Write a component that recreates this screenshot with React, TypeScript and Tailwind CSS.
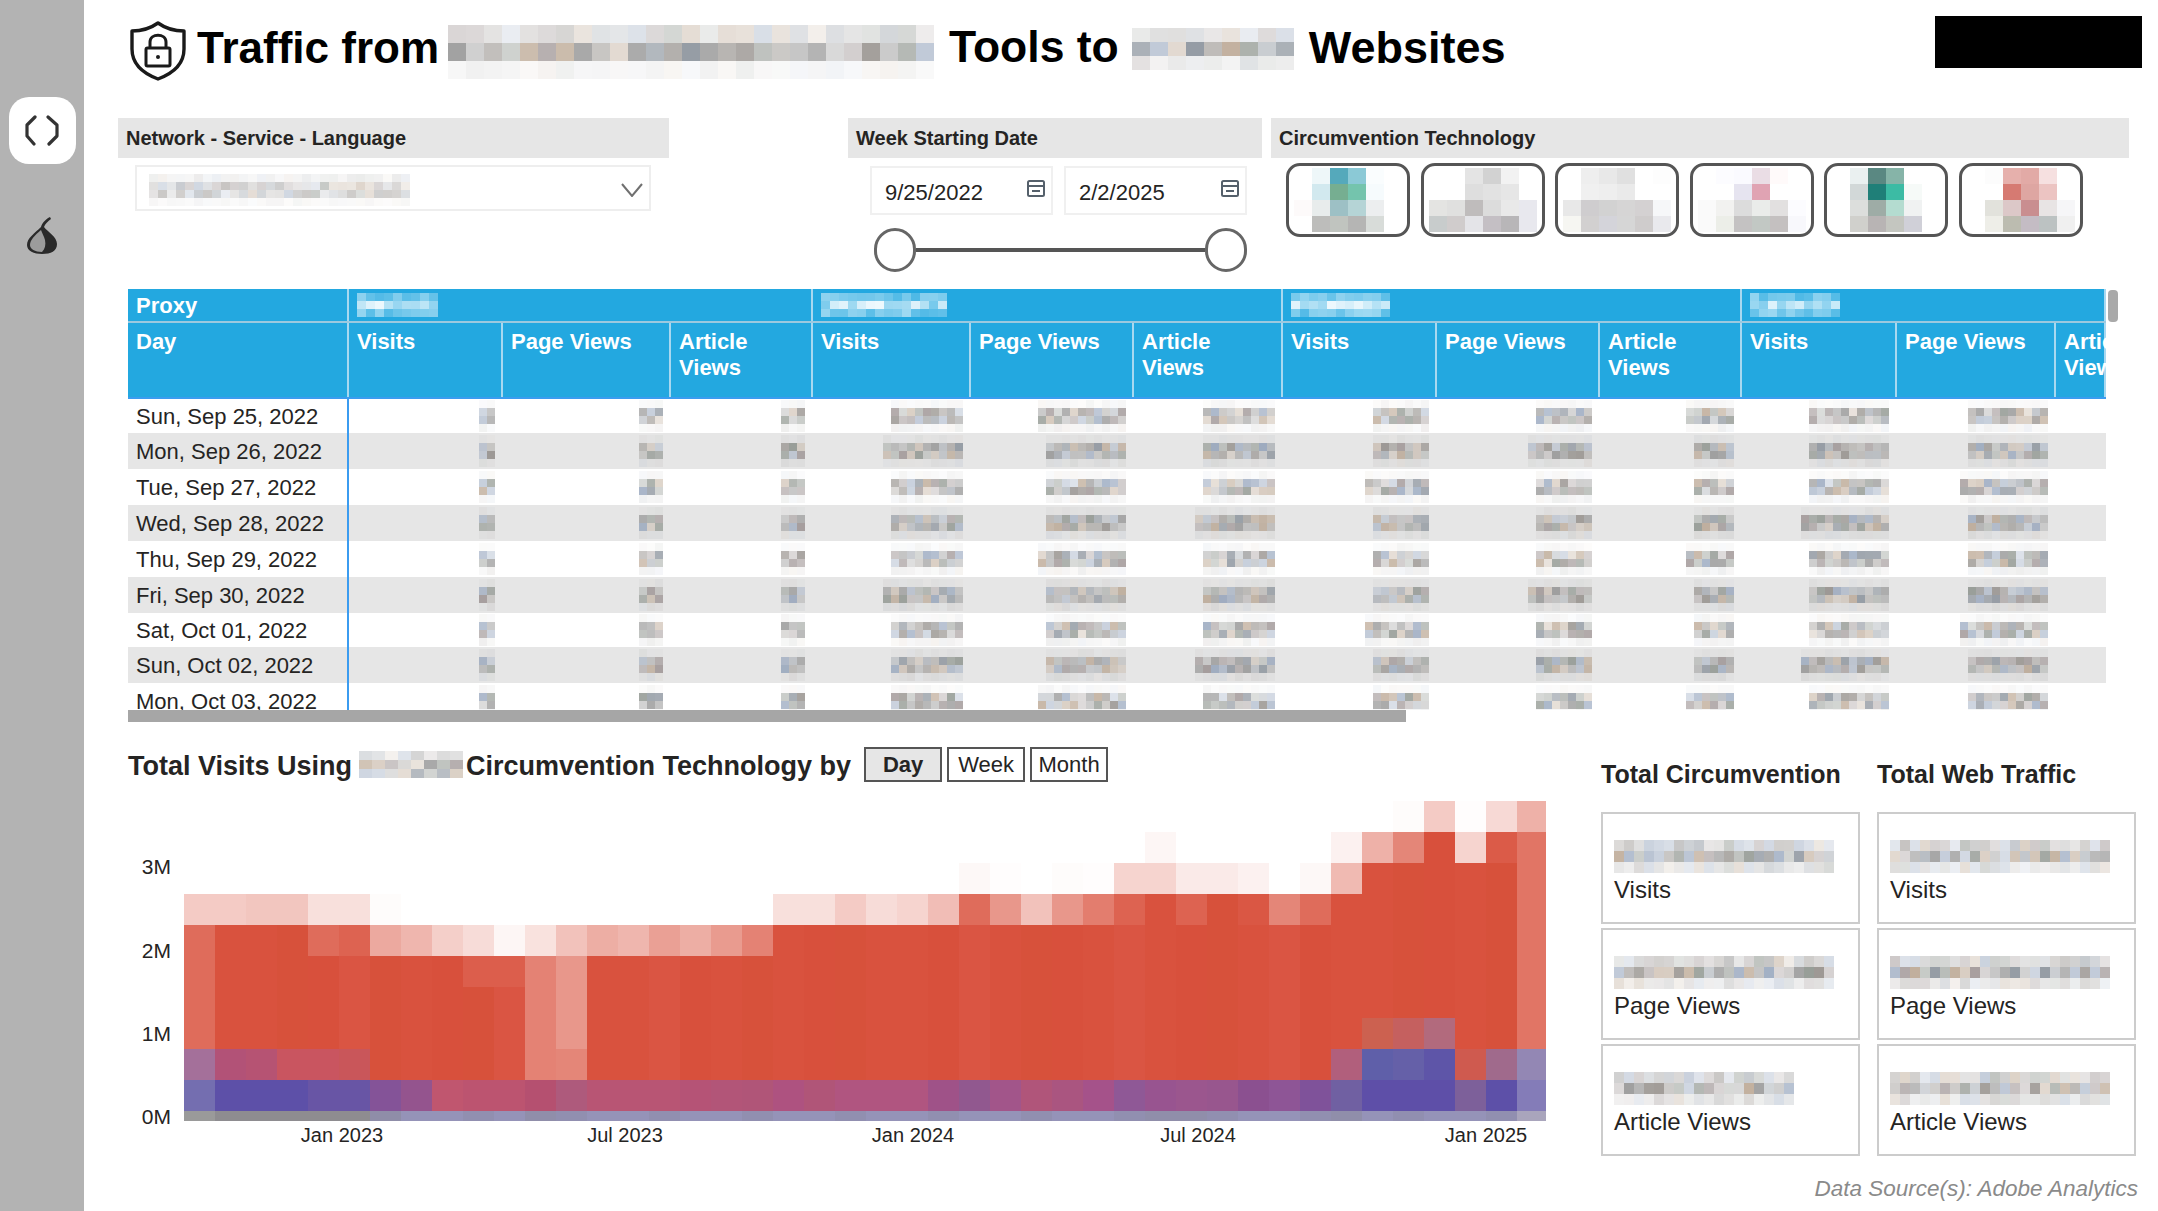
const FONT = '[font-family:"Liberation_Sans",Arial,sans-serif]';

// deterministic noise so the pixelated blocks stay the same on every load
function noise(seed: number) {
  let s = seed * 9301 + 49297;
  return () => {
    s = (s * 9301 + 49297) % 233280;
    return s / 233280;
  };
}

const GRAY_TONES = ['118,112,106', '108,118,130', '122,122,122', '130,118,118', '112,120,112', '170,145,120', '120,140,170'];

function Mosaic({
  cols,
  rows,
  cw,
  ch,
  seed,
  profile,
  tone = 'gray',
}: {
  cols: number;
  rows: number;
  cw: number;
  ch: number;
  seed: number;
  profile: number[];
  tone?: 'gray' | 'white';
}) {
  const rnd = noise(seed);
  const cells = [];
  for (let r = 0; r < rows; r++) {
    for (let c = 0; c < cols; c++) {
      const a = Math.min(1, profile[r % profile.length] * (0.55 + rnd() * 0.9));
      const base = tone === 'white' ? '255,255,255' : GRAY_TONES[Math.floor(rnd() * GRAY_TONES.length)];
      cells.push(<rect key={`${r}-${c}`} x={c * cw} y={r * ch} width={cw} height={ch} fill={`rgba(${base},${a})`} />);
    }
  }
  return (
    <svg width={cols * cw} height={rows * ch} className="block shrink-0" shapeRendering="crispEdges">
      {cells}
    </svg>
  );
}

const TILES = [
  [
    ['#fff', '#eef7f9', '#55a9bb', '#8bc9d6', '#fafdfe', '#fff'],
    ['#fff', '#d2e9ef', '#76ae91', '#74c4ad', '#f6fbfd', '#fff'],
    ['#fdfafa', '#e8ecec', '#9dc0c5', '#b5d4d6', '#eceeef', '#fff'],
    ['#fff', '#bdbdbb', '#c0c4bf', '#b5b5b4', '#d8dcd9', '#fff'],
  ],
  [
    ['#fff', '#fff', '#e4e4e4', '#d2d2d2', '#f2f2f2', '#fff'],
    ['#fff', '#fff', '#dedede', '#e2e2e2', '#e6e6e6', '#fff'],
    ['#e4e4e2', '#e0e0df', '#bfbcbc', '#dcdcdc', '#e9e9e9', '#e8e8ee'],
    ['#c8cccc', '#d0cccc', '#e4e4e8', '#c4bfc4', '#b8b6b8', '#e8e8ee'],
  ],
  [
    ['#fff', '#eeeeee', '#e8e8e8', '#e0e0e0', '#fff', '#fdfdfd'],
    ['#fff', '#f0f0f0', '#eeeeee', '#eaeaea', '#fff', '#fff'],
    ['#e8e8e8', '#cfcdcf', '#d2d2d2', '#d6d5d5', '#d4d1d2', '#f6f7f9'],
    ['#f6f6f2', '#d2d0d0', '#d4d4da', '#d6d6d6', '#cfcccc', '#e9e9ed'],
  ],
  [
    ['#fff', '#fcfcff', '#fafaff', '#eadde5', '#fffafa', '#fff'],
    ['#fff', '#fff', '#e6e4f0', '#e0a3b3', '#fff', '#fff'],
    ['#fafafa', '#f2f2f0', '#dcdcdc', '#eaecea', '#e2e0e0', '#fcfcff'],
    ['#fafafa', '#eceee8', '#c4c2c2', '#c2c8c4', '#c4c0c0', '#f8f8fc'],
  ],
  [
    ['#fff', '#eaf0f0', '#5a8882', '#86b4a8', '#fff', '#fff'],
    ['#fff', '#d2d8d8', '#1f7f78', '#3cbba4', '#f6faf8', '#fff'],
    ['#fff', '#dcdedc', '#9eaca6', '#b4dcd0', '#f0f2f2', '#fff'],
    ['#fff', '#d0d0cc', '#b8b4b4', '#c4c6c0', '#d0d0d8', '#fff'],
  ],
  [
    ['#fff', '#fcfcfc', '#e6b0ac', '#e2aaa6', '#f6e0e0', '#fff'],
    ['#fff', '#fff', '#d67a72', '#dea6a2', '#ecc4c2', '#fff'],
    ['#fff', '#e2e2dc', '#dcc8c8', '#c98e90', '#e8e4e4', '#f6f6f8'],
    ['#fff', '#eeeee8', '#bcbcb0', '#c4bcc4', '#bcc2c2', '#f0f0f0'],
  ],
];

function Tile({ colors }: { colors: string[][] }) {
  return (
    <div className="flex h-[74px] w-[124px] items-center justify-center rounded-[14px] border-[3px] border-[#555555] bg-white">
      <svg width={108} height={64} shapeRendering="crispEdges">
        {colors.map((row, r) =>
          row.map((fill, c) => <rect key={`${r}-${c}`} x={c * 18} y={r * 16} width={18} height={16} fill={fill} />),
        )}
      </svg>
    </div>
  );
}

// ---- heat map ----
const REDS = ['#d9523e', '#d8503c', '#da5543', '#d7513b'];
function mix(i: number, col: number) {
  if (i >= 1) return REDS[(col * 7) % 4 === 0 ? 1 : col % 5 === 0 ? 2 : col % 3 === 0 ? 3 : 0];
  const ch = (v: number) => Math.round(255 + (v - 255) * i);
  return `rgb(${ch(217)},${ch(82)},${ch(62)})`;
}

function band(fallback: number, over: Record<number, number | string>) {
  return Array.from({ length: 44 }, (_, c) => {
    const v = over[c] ?? fallback;
    return typeof v === 'string' ? v : mix(v, c);
  });
}

const body = { 0: 0.85, 11: 0.72, 12: 0.6, 43: 0.8 };
const HEAT: string[][] = [
  band(0, { 39: 0.02, 40: 0.3, 41: 0.01, 42: 0.22, 43: 0.45 }),
  band(0, { 31: 0.05, 37: 0.08, 38: 0.45, 39: 0.7, 40: 1, 41: 0.25, 42: 0.95, 43: 0.8 }),
  band(0, { 25: 0.04, 26: 0.01, 28: 0.02, 29: 0.01, 30: 0.25, 31: 0.25, 32: 0.12, 33: 0.12, 34: 0.08, 36: 0.04, 37: 0.4, 38: 1, 39: 1, 40: 1, 41: 1, 42: 1, 43: 0.8 }),
  band(1, { 0: 0.3, 1: 0.3, 2: 0.33, 3: 0.33, 4: 0.18, 5: 0.18, 6: 0.02, 7: 0, 8: 0, 9: 0, 10: 0, 11: 0, 12: 0, 13: 0, 14: 0, 15: 0, 16: 0, 17: 0, 18: 0, 19: 0.18, 20: 0.18, 21: 0.3, 22: 0.2, 23: 0.25, 24: 0.38, 25: 0.85, 26: 0.6, 27: 0.35, 28: 0.6, 29: 0.75, 30: 0.9, 32: 0.9, 34: 0.97, 35: 0.7, 36: 0.85, 43: 0.8 }),
  band(1, { 0: 0.85, 4: 0.85, 5: 0.9, 6: 0.5, 7: 0.42, 8: 0.28, 9: 0.2, 10: 0.05, 11: 0.17, 12: 0.35, 13: 0.47, 14: 0.42, 15: 0.55, 16: 0.47, 17: 0.58, 18: 0.72, 43: 0.8 }),
  band(1, { ...body, 9: 0.93, 10: 0.93 }),
  band(1, body),
  band(1, { ...body, 38: '#cc6150', 39: '#c5605f', 40: '#b26a7d' }),
  band(1, { 0: '#a4709a', 1: '#b25277', 2: '#b65373', 3: '#c95560', 4: '#c95560', 5: '#c9565a', 11: 0.72, 12: 0.7, 37: '#b15f7c', 38: '#5f5fa9', 39: '#6560a8', 40: '#5e55a8', 41: '#cf5a4f', 42: '#a06a8c', 43: '#9387b4' }),
  band(1, {
    0: '#746eb0', 1: '#5d50a8', 2: '#5d50a8', 3: '#5d50a8', 4: '#6855a5', 5: '#6855a5', 6: '#845398', 7: '#94548e', 8: '#c0566f', 9: '#bc5470', 10: '#bc5470', 11: '#b55070', 12: '#ae5a7c',
    13: '#b85574', 14: '#b85574', 15: '#b85574', 16: '#b55376', 17: '#b25578', 18: '#b05578', 19: '#ae5280', 20: '#b05578', 21: '#b05580', 22: '#b05580', 23: '#b05580', 24: '#9f5288', 25: '#91588f',
    26: '#a2558a', 27: '#b0557a', 28: '#aa5580', 29: '#a5528a', 30: '#8f5896', 31: '#985490', 32: '#9b568e', 33: '#98568e', 34: '#8b5090', 35: '#8e5596', 36: '#7f529a', 37: '#7060a2',
    38: '#5e4fa8', 39: '#5e4fa8', 40: '#5e4fa8', 41: '#7d609a', 42: '#5d50a8', 43: '#847cb8',
  }),
  Array.from({ length: 44 }, (_, c) => {
    if (c === 0) return '#9a9a9a';
    if (c < 6) return '#8e8c90';
    if (c === 6) return '#8f8da8';
    if (c === 43) return '#a9a5bc';
    if (c === 11 || c === 31 || c === 32 || c === 37) return '#908eaa';
    return c % 3 === 0 ? '#918fb0' : '#9593b8';
  }),
];

const Y_TICKS = [
  ['3M', 77],
  ['2M', 161],
  ['1M', 244],
  ['0M', 327],
] as const;
const X_TICKS = [
  ['Jan 2023', 214],
  ['Jul 2023', 497],
  ['Jan 2024', 785],
  ['Jul 2024', 1070],
  ['Jan 2025', 1358],
] as const;

function HeatChart() {
  return (
    <svg width={1418} height={360} className="mt-[9px] block" fontFamily='"Liberation Sans", Arial, sans-serif'>
      <g shapeRendering="crispEdges">
        {HEAT.map((row, r) =>
          row.map((fill, c) => (
            <rect key={`${r}-${c}`} x={56 + c * 31} y={10 + r * 31} width={31} height={r === 10 ? 10 : 31} fill={fill} />
          )),
        )}
      </g>
      {Y_TICKS.map(([label, y]) => (
        <text key={label} x={43} y={y} textAnchor="end" dominantBaseline="middle" fontSize={21} fill="#252423">
          {label}
        </text>
      ))}
      {X_TICKS.map(([label, x]) => (
        <text key={label} x={x} y={346} textAnchor="middle" dominantBaseline="middle" fontSize={20} fill="#252423">
          {label}
        </text>
      ))}
    </svg>
  );
}

// ---- table ----
const GRID =
  'grid grid-cols-[221px_154px_168px_142px_158px_163px_149px_154px_163px_142px_155px_159px_50px]';
const DIVIDER = 'border-r-2 border-[#a8d8f0]';
const GROUPS = [
  { cols: 9, span: 'col-span-3', seed: 11 },
  { cols: 14, span: 'col-span-3', seed: 23 },
  { cols: 11, span: 'col-span-3', seed: 37 },
  { cols: 10, span: 'col-span-3', seed: 41 },
];
const DAYS = [
  'Sun, Sep 25, 2022',
  'Mon, Sep 26, 2022',
  'Tue, Sep 27, 2022',
  'Wed, Sep 28, 2022',
  'Thu, Sep 29, 2022',
  'Fri, Sep 30, 2022',
  'Sat, Oct 01, 2022',
  'Sun, Oct 02, 2022',
  'Mon, Oct 03, 2022',
];
const ROW_HEIGHTS = ['h-[34px]', 'h-9', 'h-9', 'h-9', 'h-9', 'h-9', 'h-[34px]', 'h-9', 'h-9'];
const VALUE_WIDTHS = [2, 3, 3, 9, 10, 9, 7, 7, 5, 10, 10];

function DataTable() {
  return (
    <div className={`ml-[44px] flex h-[433px] items-start ${FONT}`}>
      <div className="w-[1978px]">
        <div className="h-[421px] overflow-hidden">
          <div className="bg-[#23a8e0] text-[22px] font-bold leading-[26px] text-white">
            <div className={`${GRID} h-[34px] border-b-2 border-[#9cc9df]`}>
              <div className={`${DIVIDER} px-2 pt-1`}>Proxy</div>
              {GROUPS.map((g) => (
                <div key={g.seed} className={`${g.span} ${DIVIDER} flex items-center pl-2`}>
                  <Mosaic cols={g.cols} rows={3} cw={9} ch={8} seed={g.seed} profile={[0.35, 0.65, 0.4]} tone="white" />
                </div>
              ))}
            </div>
            <div className={`${GRID} h-[76px] overflow-hidden border-b-2 border-[#3b9cf0]`}>
              <div className={`${DIVIDER} px-2 pt-1.5`}>Day</div>
              {GROUPS.flatMap((g) => [
                <div key={`${g.seed}-v`} className={`${DIVIDER} pl-2 pt-1.5`}>
                  Visits
                </div>,
                <div key={`${g.seed}-p`} className={`${DIVIDER} pl-2 pt-1.5`}>
                  Page Views
                </div>,
                <div key={`${g.seed}-a`} className={`${DIVIDER} whitespace-nowrap pl-2 pt-1.5`}>
                  Article
                  <br />
                  Views
                </div>,
              ])}
            </div>
          </div>
          {DAYS.map((day, r) => (
            <div
              key={day}
              className={`${GRID} ${ROW_HEIGHTS[r]} ${r % 2 === 1 ? 'bg-[#e6e6e6]' : 'bg-white'} items-stretch text-[22px] text-[#252423]`}
            >
              <div className="flex items-center border-r-2 border-[#3b9cf0] pl-2">{day}</div>
              {VALUE_WIDTHS.map((w, c) => (
                <div key={c} className="flex items-center justify-end pr-2">
                  <Mosaic
                    cols={w + ((r + c) % 4 === 0 && w > 3 ? 1 : 0)}
                    rows={4}
                    cw={8}
                    ch={8}
                    seed={r * 17 + c * 5 + 3}
                    profile={[0.05, 0.45, 0.45, 0.08]}
                  />
                </div>
              ))}
              <div />
            </div>
          ))}
        </div>
        <div className="h-3 w-[1278px] bg-[#a6a6a6]" />
      </div>
      <div className="ml-0.5 mt-px h-8 w-2.5 rounded-sm bg-[#a9a9a9]" />
    </div>
  );
}

// ---- small drawings ----
function ShieldLock() {
  return (
    <svg width={58} height={60} viewBox="0 0 58 60" fill="none" stroke="#1a1a1a" className="mt-[7px] shrink-0">
      <path d="M29 2 C36 7 45 10 55 10 V28 C55 42 45 52 29 58 C13 52 3 42 3 28 V10 C13 10 22 7 29 2 Z" strokeWidth={3.4} strokeLinejoin="round" />
      <rect x={17} y={27} width={24} height={18} rx={1.5} strokeWidth={3} />
      <path d="M21 27 V21 C21 12 37 12 37 21 V27" strokeWidth={3} />
      <circle cx={29} cy={36} r={2} fill="#1a1a1a" stroke="none" />
    </svg>
  );
}

function Parens() {
  return (
    <svg width={34} height={32} viewBox="0 0 34 32" fill="none" stroke="#333333" strokeWidth={3.2} strokeLinecap="round" strokeLinejoin="round">
      <path d="M10 2 L2 10 L2 21 L9 29" />
      <path d="M23 2 L32 10 L32 21 L24 29" />
    </svg>
  );
}

function Onion() {
  return (
    <svg width={30} height={40} viewBox="0 0 30 40">
      <path d="M23 1 C19 3 15 7 14 11 C8 17 0 22 0 29 C0 35 7 38 15 38 C24 38 30 35 30 28 C30 21 21 16 17 11 C18 8 21 5 24 3 Z" fill="#2a2a2a" />
      <path d="M14 14 C8 19 3 24 3 29 C3 33 8 36 15 36 C18 33 19 29 18 24 C17 20 15 17 14 14 Z" fill="#9c9c9c" />
    </svg>
  );
}

function CalendarIcon() {
  return (
    <svg width={18} height={17} viewBox="0 0 18 17" fill="none" stroke="#55606b" strokeWidth={2} className="mb-1 shrink-0">
      <rect x={1} y={1} width={16} height={15} rx={1.5} />
      <path d="M1 6 H17 M5 11 H13" />
    </svg>
  );
}

function DateBox({ value }: { value: string }) {
  return (
    <div className="flex h-[49px] w-[183px] items-center justify-between border-2 border-[#f0f0f0] pl-[13px] pr-[6px] text-[22px] text-[#252423]">
      <span className="mt-1">{value}</span>
      <CalendarIcon />
    </div>
  );
}

function Thumb() {
  return <div className="h-11 w-[42px] shrink-0 rounded-full border-[3px] border-[#666666] bg-white" />;
}

function FilterLabel({ children }: { children: string }) {
  return (
    <div className="flex h-10 items-center bg-[#e6e6e6] pl-2 text-[20px] font-bold text-[#252423]">{children}</div>
  );
}

function ToggleButton({ label, active }: { label: string; active?: boolean }) {
  return (
    <div
      className={`flex h-[35px] w-[78px] items-center justify-center border-2 border-[#555555] text-[22px] text-[#252423] ${active ? 'bg-[#e6e6e6] font-bold' : 'bg-white font-normal'}`}
    >
      {label}
    </div>
  );
}

function KpiCard({ label, seed, cols }: { label: string; seed: number; cols: number }) {
  return (
    <div className="flex h-[112px] flex-col justify-center border-2 border-[#cccccc] pl-[11px] pt-[7px] text-[24px] leading-7 text-[#252423]">
      <Mosaic cols={cols} rows={3} cw={10} ch={11} seed={seed} profile={[0.3, 0.5, 0.2]} />
      <div className="mt-[3px]">{label}</div>
    </div>
  );
}

export default function App() {
  return (
    <div className={`flex h-[1211px] w-[2158px] overflow-hidden bg-white ${FONT}`}>
      {/* nav rail */}
      <div className="flex w-[84px] shrink-0 flex-col items-center bg-[#b3b3b3] pt-[97px]">
        <div className="flex h-[67px] w-[67px] items-center justify-center rounded-[20px] bg-white">
          <Parens />
        </div>
        <div className="mt-[52px]">
          <Onion />
        </div>
      </div>

      <div className="min-w-0 flex-1">
        {/* title */}
        <div className="flex h-[118px] items-center pb-[23px] pl-[45px] pr-4 text-[44px] font-bold leading-none text-black">
          <ShieldLock />
          <span className="ml-[10px]">Traffic from</span>
          <div className="ml-[9px] mt-[9px]">
            <Mosaic cols={27} rows={3} cw={18} ch={18} seed={5} profile={[0.22, 0.5, 0.08]} />
          </div>
          <span className="ml-[15px] text-[44.5px]">Tools to</span>
          <div className="ml-[13px] mt-0.5">
            <Mosaic cols={9} rows={3} cw={18} ch={14} seed={9} profile={[0.2, 0.5, 0.15]} />
          </div>
          <span className="ml-[15px] text-[45px]">Websites</span>
          <div className="mb-[11px] ml-auto h-[52px] w-[207px] bg-black" />
        </div>

        {/* slicers */}
        <div className="flex h-[171px] items-start pl-[34px]">
          <div className="w-[551px]">
            <FilterLabel>Network - Service - Language</FilterLabel>
            <div className="ml-[17px] mt-[7px] flex h-[46px] w-[516px] items-center justify-between border-2 border-[#eeeeee] pl-3 pr-1.5">
              <div className="mt-1">
                <Mosaic cols={29} rows={4} cw={9} ch={8} seed={19} profile={[0.1, 0.28, 0.26, 0.05]} />
              </div>
              <svg width={22} height={14} viewBox="0 0 22 14" fill="none" stroke="#707070" strokeWidth={2} className="mt-1">
                <path d="M1 1 L11 13 L21 1" />
              </svg>
            </div>
          </div>
          <div className="ml-[179px] w-[414px]">
            <FilterLabel>Week Starting Date</FilterLabel>
            <div className="ml-[22px] mt-2 flex gap-[11px]">
              <DateBox value="9/25/2022" />
              <DateBox value="2/2/2025" />
            </div>
            <div className="ml-[26px] mt-[13px] flex w-[373px] items-center">
              <Thumb />
              <div className="h-1 flex-1 bg-[#555555]" />
              <Thumb />
            </div>
          </div>
          <div className="ml-[9px] w-[858px]">
            <FilterLabel>Circumvention Technology</FilterLabel>
            <div className="ml-[15px] mt-[5px] flex gap-[10.5px]">
              {TILES.map((t, i) => (
                <Tile key={i} colors={t} />
              ))}
            </div>
          </div>
        </div>

        <DataTable />

        {/* chart and totals */}
        <div className="flex">
          <div className="ml-[44px] w-[1473px] pt-[25px]">
            <div className="flex h-[35px] items-center text-[27px] font-bold text-[#252423]">
              <span className="mt-1">Total Visits Using</span>
              <div className="ml-[7px]">
                <Mosaic cols={8} rows={3} cw={13} ch={9} seed={31} profile={[0.22, 0.45, 0.35]} />
              </div>
              <span className="ml-[3px] mt-1">Circumvention Technology by</span>
              <div className="ml-[13px] flex gap-[5px]">
                <ToggleButton label="Day" active />
                <ToggleButton label="Week" />
                <ToggleButton label="Month" />
              </div>
            </div>
            <HeatChart />
          </div>

          <div className="w-[537px] pt-[38px]">
            <div className="grid grid-cols-[259px_259px] gap-x-[17px] text-[25px] font-bold leading-7 text-[#252423]">
              <div>Total Circumvention</div>
              <div>Total Web Traffic</div>
            </div>
            <div className="mt-[24px] grid grid-cols-[259px_259px] gap-x-[17px] gap-y-1">
              <KpiCard label="Visits" seed={51} cols={22} />
              <KpiCard label="Visits" seed={52} cols={22} />
              <KpiCard label="Page Views" seed={53} cols={22} />
              <KpiCard label="Page Views" seed={54} cols={22} />
              <KpiCard label="Article Views" seed={55} cols={18} />
              <KpiCard label="Article Views" seed={56} cols={22} />
            </div>
            <div className="mt-[21px] text-right text-[22.5px] italic leading-6 text-[#8a8a8a]">
              Data Source(s): Adobe Analytics
            </div>
          </div>
        </div>
      </div>
    </div>
  );
}
